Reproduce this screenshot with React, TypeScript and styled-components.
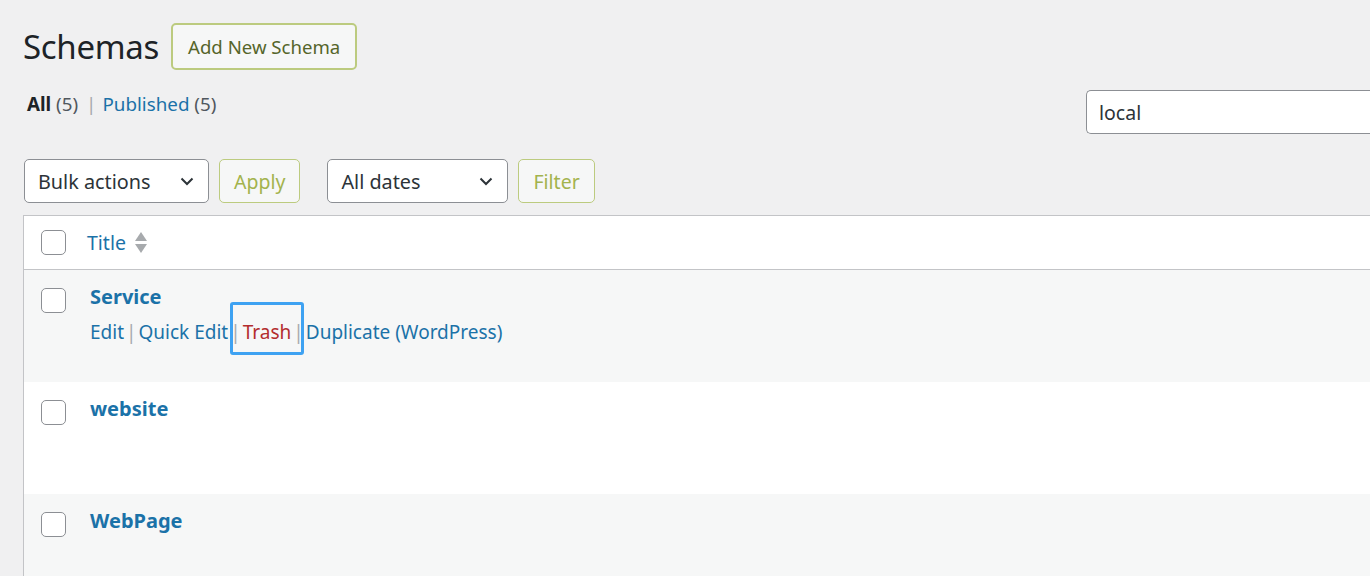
import type { FC } from 'react'
import styled, { createGlobalStyle } from 'styled-components'

const GlobalStyle = createGlobalStyle`
  html, body {
    margin: 0;
    padding: 0;
    overflow: hidden;
    background: #f0f0f1;
  }
  body {
    font-family: 'Noto Sans', 'Open Sans', sans-serif;
    color: #3c434a;
  }
`

const rows = [
  { title: 'Service', actions: true },
  { title: 'website', actions: false },
  { title: 'WebPage', actions: false },
]

const App: FC = () => {
  return (
    <>
      <GlobalStyle />
      <Page>
        <HeaderRow>
          <Heading>Schemas</Heading>
          <AddButton>Add New Schema</AddButton>
        </HeaderRow>

        <FilterRow>
          <SubSubSub>
            <strong>All</strong> <Count>(5)</Count>
            <Pipe>|</Pipe>
            <Link>Published</Link> <Count>(5)</Count>
          </SubSubSub>
          <SearchInput defaultValue="local" />
        </FilterRow>

        <TableNav>
          <Select $width={185}>
            Bulk actions
            <Chevron />
          </Select>
          <GreenButton>Apply</GreenButton>
          <Select $width={181} $gap={27}>
            All dates
            <Chevron />
          </Select>
          <GreenButton>Filter</GreenButton>
        </TableNav>

        <Table>
          <HeadRow>
            <CheckCell>
              <Checkbox />
            </CheckCell>
            <HeadTitle>
              Title
              <SortArrows>
                <svg width="14" height="24" viewBox="0 0 14 24">
                  <path d="M7 1 L13 10 L1 10 Z" fill="#a7aaad" />
                  <path d="M1 13 L13 13 L7 22 Z" fill="#a7aaad" />
                </svg>
              </SortArrows>
            </HeadTitle>
          </HeadRow>

          {rows.map((row, i) => (
            <BodyRow key={row.title} $alt={i % 2 === 0}>
              <CheckCell>
                <Checkbox />
              </CheckCell>
              <TitleCell>
                <RowTitle>{row.title}</RowTitle>
                {row.actions && (
                  <RowActions>
                    <Link>Edit</Link>
                    <Sep>|</Sep>
                    <Link>Quick Edit</Link>
                    <TrashWrap>
                      <Sep>|</Sep>
                      <Trash>Trash</Trash>
                      <Sep>|</Sep>
                      <Highlight />
                    </TrashWrap>
                    <Link>Duplicate (WordPress)</Link>
                  </RowActions>
                )}
              </TitleCell>
            </BodyRow>
          ))}
        </Table>
      </Page>
    </>
  )
}

const Chevron: FC = () => (
  <ChevronIcon width="16" height="16" viewBox="0 0 16 16">
    <path d="M2.5 5.5 L8 11 L13.5 5.5" fill="none" stroke="#2c3338" strokeWidth="2" />
  </ChevronIcon>
)

/* ─── layout ─── */

const Page = styled.div`
  width: 1400px;
  padding: 23px 0 0 23px;
  box-sizing: border-box;
`

const HeaderRow = styled.div`
  display: flex;
  align-items: center;
  height: 47px;
`

const Heading = styled.h1`
  margin: 0;
  font-size: 33px;
  font-weight: 400;
  color: #1d2327;
  letter-spacing: -0.3px;
`

const AddButton = styled.button`
  margin-left: 12px;
  height: 47px;
  padding: 0 15px;
  background: #f6f7f7;
  border: 2px solid #bccb7f;
  border-radius: 5px;
  color: #55652a;
  font-family: inherit;
  font-size: 18.6px;
`

const FilterRow = styled.div`
  display: flex;
  align-items: flex-start;
  justify-content: space-between;
  margin-top: 20px;
`

const SubSubSub = styled.div`
  margin: 2px 0 0 4px;
  line-height: 24px;
  font-size: 18.8px;
  color: #1d2327;

  strong {
    font-weight: 700;
  }
`

const Count = styled.span`
  color: #50575e;
`

const Pipe = styled.span`
  margin: 0 6px 0 8px;
  color: #a7aaad;
`

const Link = styled.span`
  color: #1b72a8;
`

const SearchInput = styled.input`
  width: 314px;
  height: 44px;
  box-sizing: border-box;
  padding: 0 12px;
  border: 1px solid #8c8f94;
  border-right: none;
  border-radius: 5px 0 0 5px;
  background: #fff;
  font-family: inherit;
  font-size: 19.5px;
  color: #2c3338;
  outline: none;
`

const TableNav = styled.div`
  display: flex;
  align-items: center;
  gap: 10px;
  margin-top: 25px;
  margin-left: 1px;
`

const Select = styled.div<{ $width: number; $gap?: number }>`
  display: flex;
  align-items: center;
  justify-content: space-between;
  width: ${p => p.$width}px;
  height: 44px;
  box-sizing: border-box;
  margin-left: ${p => (p.$gap ? p.$gap - 10 : 0)}px;
  padding: 0 13px;
  background: #fff;
  border: 1px solid #8c8f94;
  border-radius: 5px;
  font-size: 19.8px;
  color: #2c3338;
`

const ChevronIcon = styled.svg`
  flex-shrink: 0;
`

const GreenButton = styled.button`
  height: 44px;
  padding: 0 14px;
  background: #f6f7f7;
  border: 1px solid #bccb7f;
  border-radius: 5px;
  color: #a3b34d;
  font-family: inherit;
  font-size: 19.5px;
`

/* ─── table ─── */

const Table = styled.div`
  margin-top: 12px;
  background: #fff;
  border: 1px solid #c3c4c7;
  border-right: none;
`

const HeadRow = styled.div`
  display: flex;
  align-items: center;
  height: 53px;
  border-bottom: 1px solid #c3c4c7;
`

const CheckCell = styled.div`
  width: 63px;
  padding-left: 17px;
  box-sizing: border-box;
  flex-shrink: 0;
`

const Checkbox = styled.span`
  display: block;
  width: 25px;
  height: 25px;
  box-sizing: border-box;
  border: 1px solid #8c8f94;
  border-radius: 5px;
  background: #fff;
`

const HeadTitle = styled.div`
  display: flex;
  align-items: center;
  font-size: 19.5px;
  color: #1b72a8;
`

const SortArrows = styled.span`
  display: flex;
  margin-left: 8px;
`

const BodyRow = styled.div<{ $alt: boolean }>`
  display: flex;
  align-items: flex-start;
  height: 112px;
  padding-top: 18px;
  box-sizing: border-box;
  background: ${p => (p.$alt ? '#f6f7f7' : '#fff')};
`

const TitleCell = styled.div`
  padding-left: 3px;
  margin-top: -5px;
`

const RowTitle = styled.div`
  font-size: 20px;
  font-weight: 700;
  line-height: 28px;
  color: #1b72a8;
`

const RowActions = styled.div`
  display: flex;
  align-items: center;
  margin-top: 7px;
  font-size: 19px;
  line-height: 28px;
`

const Sep = styled.span`
  margin: 0 2px;
  color: #a7aaad;
`

const TrashWrap = styled.span`
  position: relative;
  display: flex;
  align-items: center;
`

const Trash = styled.span`
  color: #b32d2e;
`

const Highlight = styled.span`
  position: absolute;
  left: 2px;
  right: 2px;
  top: -16px;
  bottom: -9px;
  border: 3px solid #3ea2f2;
  border-radius: 3px;
  pointer-events: none;
`

export default App
